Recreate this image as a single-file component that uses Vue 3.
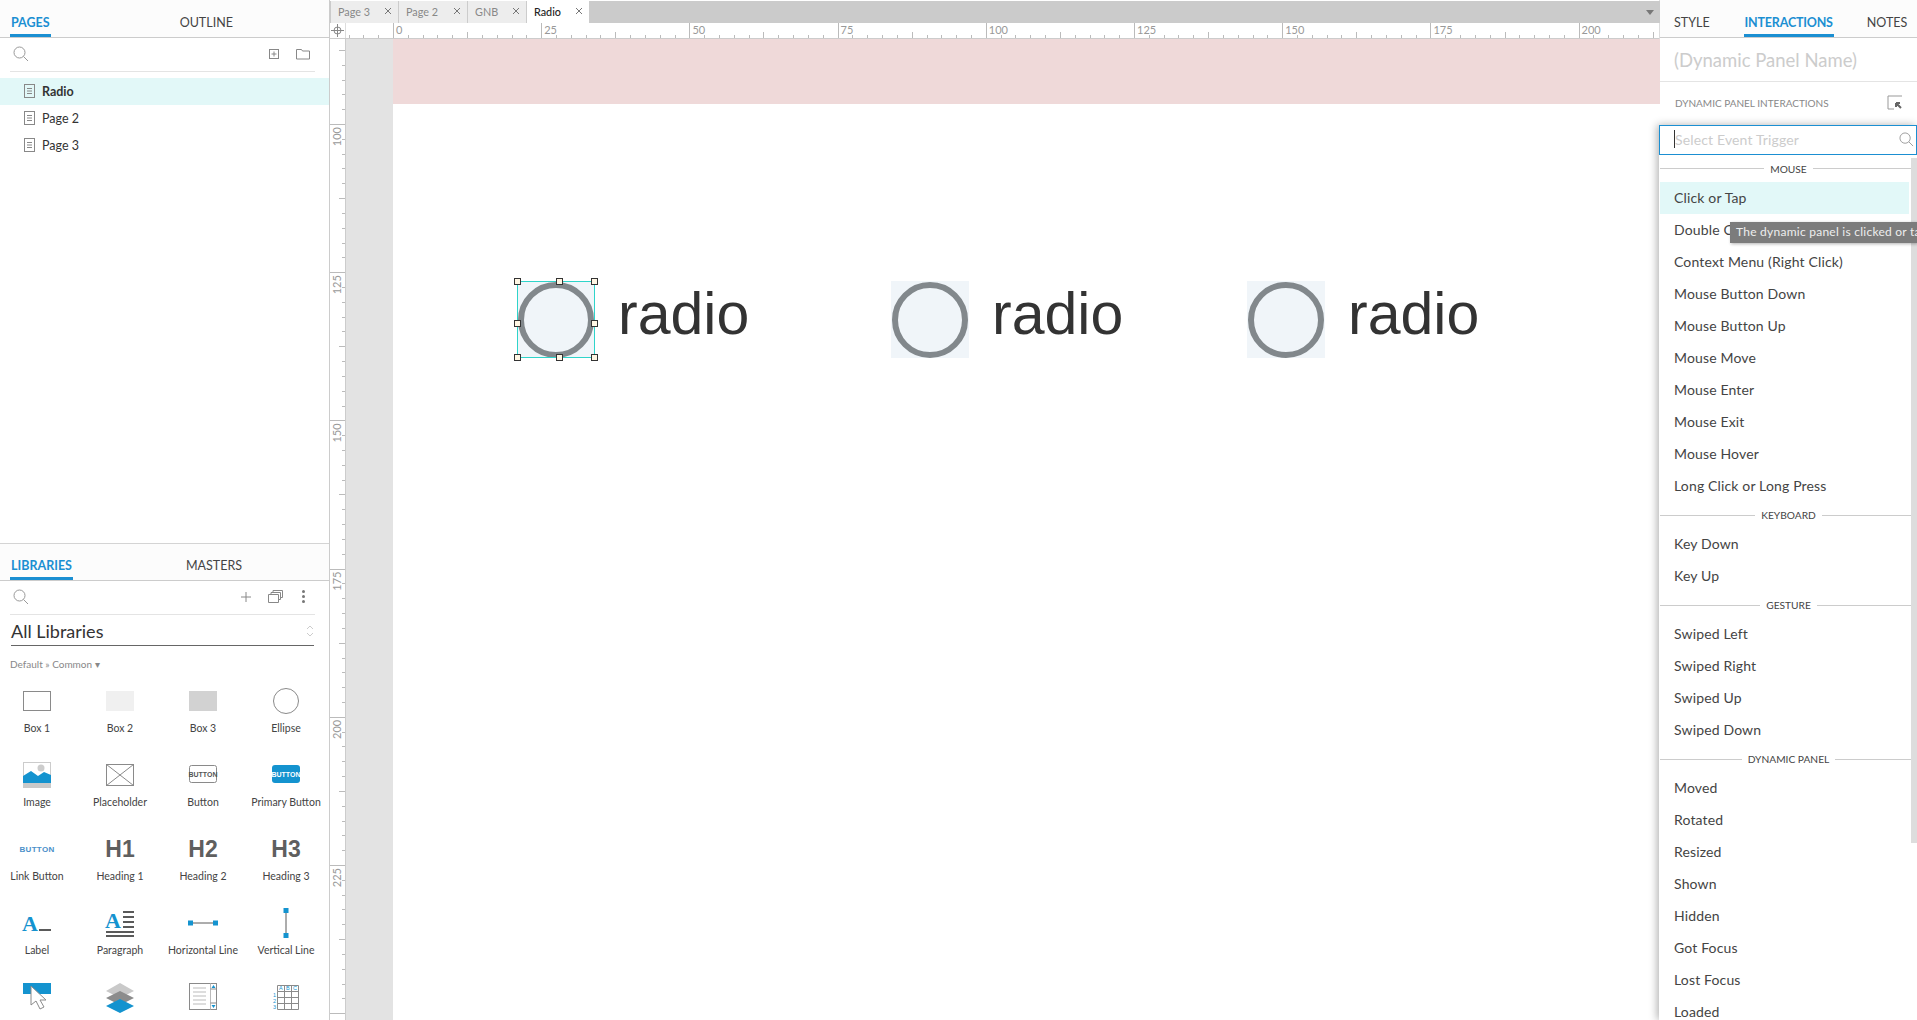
<template>
  <div class="app">
    <aside class="left">
      <section class="pages">
        <div class="tabs">
          <span class="tab active">PAGES</span>
          <span class="tab outline">OUTLINE</span>
        </div>
        <div class="toolbar">
          <svg class="search" width="16" height="16" viewBox="0 0 16 16">
            <circle cx="6.500" cy="6.500" r="5.500" /><path d="M10.500 10.500 15 15" />
          </svg>
          <svg class="tool first" width="12" height="12" viewBox="0 0 12 12">
            <rect x="1.500" y="1.500" width="9" height="9" /><path d="M6 3.500v5M3.500 6h5" />
          </svg>
          <svg class="tool" width="14" height="12" viewBox="0 0 14 12">
            <path d="M.5 1.500h5l1 1.500h7v8H.5z" />
          </svg>
        </div>
        <ul class="page-list">
          <li v-for="p in pages" :key="p" :class="{ current: p === 'Radio' }">
            <svg width="12" height="15" viewBox="0 0 12 15">
              <rect x=".5" y=".5" width="10" height="13" /><path d="M3 4.500h5M3 7h5M3 9.500h5" />
            </svg>
            {{ p }}
          </li>
        </ul>
      </section>

      <section class="libraries">
        <div class="tabs">
          <span class="tab active">LIBRARIES</span>
          <span class="tab masters">MASTERS</span>
        </div>
        <div class="toolbar">
          <svg class="search" width="16" height="16" viewBox="0 0 16 16">
            <circle cx="6.500" cy="6.500" r="5.500" /><path d="M10.500 10.500 15 15" />
          </svg>
          <svg class="tool lib-first" width="12" height="12" viewBox="0 0 12 12">
            <path d="M6 1v10M1 6h10" />
          </svg>
          <svg class="tool lib-copy" width="15" height="13" viewBox="0 0 15 13">
            <path d="M.5 4.500h10v8H.5zM3 4.500V2.500h9.500v7h-2M5 2.500V.5h9.500v7h-2" />
          </svg>
          <span class="dots"><i></i><i></i><i></i></span>
        </div>
        <div class="lib-select">
          <span>All Libraries</span>
          <svg width="8" height="14" viewBox="0 0 8 14"><path d="M1 5l3-3 3 3M1 9l3 3 3-3" /></svg>
        </div>
        <div class="crumb">Default » Common ▾</div>
        <div class="widgets">
          <div v-for="w in widgets" :key="w.id" class="widget">
            <div class="widget-icon">
              <span v-if="w.text" :class="w.cls">{{ w.text }}</span>
              <svg v-else width="40" height="40" viewBox="0 0 40 40" v-html="w.svg"></svg>
            </div>
            <div v-if="w.name" class="widget-name">{{ w.name }}</div>
          </div>
        </div>
      </section>
    </aside>

    <main class="center">
      <div class="doc-tabs">
        <div v-for="t in docTabs" :key="t.name" class="doc-tab" :class="{ open: t.name === 'Radio' }" :style="{ width: t.w + 'px' }">
          <span>{{ t.name }}</span>
          <svg width="8" height="8" viewBox="0 0 8 8"><path d="M1 1l6 6M7 1 1 7" /></svg>
        </div>
        <span class="doc-caret"></span>
      </div>

      <div class="ruler-top">
        <div class="corner">
          <svg width="13" height="13" viewBox="0 0 13 13">
            <circle cx="6.500" cy="6.500" r="3.500" /><path d="M6.500 0v13M0 6.500h13" />
          </svg>
        </div>
        <svg class="hticks" width="1314" height="15">
          <path :d="hPath" />
          <text v-for="l in hLabels" :key="l.v" :x="l.x" y="11">{{ l.v }}</text>
        </svg>
      </div>

      <div class="work">
        <svg class="vticks" width="15" height="982">
          <path :d="vPath" />
          <text v-for="l in vLabels" :key="l.v" :transform="`translate(11 ${l.y}) rotate(-90)`" text-anchor="end">{{ l.v }}</text>
        </svg>
        <div class="pasteboard">
          <div class="page">
            <div class="banner"></div>
            <div v-for="r in radios" :key="r.x" class="radio" :style="{ left: r.x + 'px' }">
              <div class="radio-box"><div class="radio-ring"></div></div>
              <span class="radio-label">radio</span>
            </div>
            <div class="selection">
              <i v-for="h in handles" :key="h" :class="h"></i>
            </div>
          </div>
        </div>
      </div>
    </main>

    <aside class="right">
      <div class="tabs right-tabs">
        <span class="tab">STYLE</span>
        <span class="tab active">INTERACTIONS</span>
        <span class="tab">NOTES</span>
      </div>
      <div class="panel-name">(Dynamic Panel Name)</div>
      <div class="panel-head">
        <span>DYNAMIC PANEL INTERACTIONS</span>
        <svg width="16" height="15" viewBox="0 0 16 15">
          <path class="thin" d="M15 1H1v13h6" />
          <path class="thick" d="M9 8l5 5M9 8v4M9 8h4" />
        </svg>
      </div>
      <div class="dropdown">
        <div class="trigger-input">
          <span class="caret"></span>
          <span class="placeholder">Select Event Trigger</span>
          <svg class="search" width="15" height="15" viewBox="0 0 16 16">
            <circle cx="6.500" cy="6.500" r="5.500" /><path d="M10.500 10.500 15 15" />
          </svg>
        </div>
        <div class="list">
          <template v-for="g in groups" :key="g.title">
            <div class="group-title"><span>{{ g.title }}</span></div>
            <div v-for="e in g.items" :key="e" class="event" :class="{ hover: e === 'Click or Tap' }">{{ e }}</div>
          </template>
        </div>
        <div class="scrollbar"></div>
        <div class="tooltip">The dynamic panel is clicked or tapped</div>
      </div>
    </aside>
  </div>
</template>

<script setup>
const pages = ['Radio', 'Page 2', 'Page 3']

const docTabs = [
  { name: 'Page 3', w: 68 },
  { name: 'Page 2', w: 69 },
  { name: 'GNB', w: 59 },
  { name: 'Radio', w: 63 }
]

const blue = '#1493cf'
const gray = '#8a8a8a'
const dark = '#5a5a5a'

const widgets = [
  { id: 'box1', name: 'Box 1', svg: `<rect x="6.500" y="10.500" width="27" height="19" fill="#fff" stroke="${gray}"/>` },
  { id: 'box2', name: 'Box 2', svg: '<rect x="6" y="10" width="28" height="20" fill="#f0f0f0"/>' },
  { id: 'box3', name: 'Box 3', svg: '<rect x="6" y="10" width="28" height="20" fill="#d2d2d2"/>' },
  { id: 'ellipse', name: 'Ellipse', svg: `<circle cx="20" cy="20" r="12.500" fill="#fff" stroke="${gray}"/>` },
  { id: 'image', name: 'Image', svg: `<rect x="6.500" y="7.500" width="27" height="25" fill="#fff" stroke="#ccc"/><circle cx="24" cy="13" r="3.500" fill="#ccc"/><path d="M6 21l8-5 7 5 6-4 7 3v8H6z" fill="${blue}"/><rect x="6" y="28" width="28" height="5" fill="#c9c9c9"/>` },
  { id: 'placeholder', name: 'Placeholder', svg: `<rect x="6.500" y="9.500" width="27" height="21" fill="#fff" stroke="${gray}"/><path d="M6.500 9.500l27 21M33.500 9.500l-27 21" stroke="${gray}" fill="none"/>` },
  { id: 'button', name: 'Button', svg: `<rect x="6.500" y="10.500" width="27" height="17" rx="2" fill="#fff" stroke="${gray}"/><text x="20" y="22" font-size="7" font-weight="700" text-anchor="middle" fill="#555" font-family="Liberation Sans">BUTTON</text>` },
  { id: 'primary', name: 'Primary Button', svg: `<rect x="6" y="10" width="28" height="18" rx="3" fill="${blue}"/><text x="20" y="22" font-size="7" font-weight="700" text-anchor="middle" fill="#fff" font-family="Liberation Sans">BUTTON</text>` },
  { id: 'link', name: 'Link Button', text: 'BUTTON', cls: 'link-btn' },
  { id: 'h1', name: 'Heading 1', text: 'H1', cls: 'heading' },
  { id: 'h2', name: 'Heading 2', text: 'H2', cls: 'heading' },
  { id: 'h3', name: 'Heading 3', text: 'H3', cls: 'heading' },
  { id: 'label', name: 'Label', svg: `<text x="5" y="28" font-size="22" font-weight="700" fill="${blue}" font-family="Liberation Serif">A</text><rect x="22" y="26" width="12" height="2" fill="${dark}"/>` },
  { id: 'paragraph', name: 'Paragraph', svg: `<text x="5" y="25" font-size="22" font-weight="700" fill="${blue}" font-family="Liberation Serif">A</text><path d="M23 9h11M23 14h11M23 19h11M23 24h11M6 29h28M6 33h28" stroke="${dark}" stroke-width="2"/>` },
  { id: 'hline', name: 'Horizontal Line', svg: `<path d="M8 20h24" stroke="${dark}"/><rect x="5" y="17.500" width="5" height="5" fill="${blue}"/><rect x="30" y="17.500" width="5" height="5" fill="${blue}"/>` },
  { id: 'vline', name: 'Vertical Line', svg: `<path d="M20 8v24" stroke="${dark}"/><rect x="17.500" y="5" width="5" height="5" fill="${blue}"/><rect x="17.500" y="30" width="5" height="5" fill="${blue}"/>` },
  // last row is cut by the window, its captions fall below the edge
  { id: 'hotspot', svg: `<rect x="6" y="6" width="28" height="11" fill="${blue}"/><path d="M14 9v19l5-4 4 8 4-2-4-7h6z" fill="#fff" stroke="${gray}"/>` },
  { id: 'layers', svg: `<path d="M20 6l14 8-14 7-14-7z" fill="#c9c9c9"/><path d="M20 14l14 7-14 7-14-7z" fill="#8c8c8c"/><path d="M20 22l14 7-14 7-14-7z" fill="${blue}"/>` },
  { id: 'repeater', svg: `<rect x="6.500" y="6.500" width="27" height="26" fill="#fff" stroke="${gray}"/><path d="M27.500 6.500v26M10 11h13M10 15h13M10 19h13M10 23h13M10 27h13" stroke="#bbb"/><path d="M27.500 12h6M27.500 26h6" stroke="${gray}"/><path d="M30.500 8l2 3h-4zM30.500 31l2-3h-4z" fill="${blue}"/>` },
  { id: 'table', svg: `<path d="M11.500 14.500h21M11.500 20.500h21M11.500 26.500h21M11.500 32.500h21M11.500 14.500v18M18.500 8.500v24M25.500 8.500v24M32.500 8.500v24M11.500 14.500v-6h21" stroke="${gray}" fill="none"/><g font-size="5.500" font-family="Liberation Sans" fill="${blue}"><text x="13" y="13">A</text><text x="20" y="13">B</text><text x="27" y="13">C</text><text x="7" y="20">1</text><text x="7" y="26">2</text><text x="7" y="32">3</text></g>` }
]

const groups = [
  {
    title: 'MOUSE',
    items: ['Click or Tap', 'Double Click', 'Context Menu (Right Click)', 'Mouse Button Down', 'Mouse Button Up', 'Mouse Move', 'Mouse Enter', 'Mouse Exit', 'Mouse Hover', 'Long Click or Long Press']
  },
  { title: 'KEYBOARD', items: ['Key Down', 'Key Up'] },
  { title: 'GESTURE', items: ['Swiped Left', 'Swiped Right', 'Swiped Up', 'Swiped Down'] },
  { title: 'DYNAMIC PANEL', items: ['Moved', 'Rotated', 'Resized', 'Shown', 'Hidden', 'Got Focus', 'Lost Focus', 'Loaded'] }
]

const radios = [{ x: 124 }, { x: 498 }, { x: 854 }]
const handles = ['tl', 'tm', 'tr', 'ml', 'mr', 'bl', 'bm', 'br']

// rulers: 148.2px per 25 units, ten minor ticks per step
const STEP = 148.2
const ORIGIN_X = 47
const ORIGIN_Y = 85

function ticks (origin, length) {
  const out = []
  for (let i = -10; i * STEP / 10 + origin < length; i++) {
    const pos = i * STEP / 10 + origin
    if (pos < 0) continue
    const kind = i % 10 === 0 ? 15 : i % 5 === 0 ? 6 : 3
    out.push({ pos: Math.round(pos) + 0.5, len: kind })
  }
  return out
}

const hPath = ticks(ORIGIN_X, 1314).map(t => `M${t.pos} 15v-${t.len}`).join('')
const vPath = ticks(ORIGIN_Y, 982).map(t => `M15 ${t.pos}h-${t.len}`).join('')

const hLabels = []
for (let i = 0; i <= 8; i++) hLabels.push({ v: i * 25, x: ORIGIN_X + i * STEP + 3 })

const vLabels = []
for (let i = 0; i <= 5; i++) vLabels.push({ v: 100 + i * 25, y: ORIGIN_Y + i * STEP + 3 })
</script>

<style>
html, body {
  margin: 0;
  overflow: hidden;
  background: #fff;
}
</style>

<style scoped>
.app {
  display: flex;
  width: 1917px;
  height: 1020px;
  overflow: hidden;
  font-family: Lato, "Noto Sans", sans-serif;
  color: #333;
}

svg {
  fill: none;
  stroke: #888;
}

.left {
  width: 329px;
  flex: none;
  display: flex;
  flex-direction: column;
  border-right: 1px solid #ccc;
}

.pages {
  height: 543px;
  flex: none;
}

.libraries {
  flex: 1;
  border-top: 1px solid #d4d4d4;
  overflow: hidden;
}

.tabs {
  display: flex;
  height: 37px;
  align-items: flex-end;
  padding-left: 10px;
  background: #fcfcfc;
  border-bottom: 1px solid #ccc;
  font-size: 12.500px;
}

.libraries .tabs {
  height: 36px;
}

.tab {
  padding: 0 1px 4px;
  border-bottom: 3px solid transparent;
  color: #444;
}

.tab.active {
  color: #1b8fd2;
  font-weight: 700;
  border-bottom-color: #1b8fd2;
}

.outline {
  margin-left: 128px;
}

.masters {
  margin-left: 112px;
}

.toolbar {
  display: flex;
  align-items: center;
  height: 31px;
  margin: 0 14px 0 10px;
  padding: 0 5px 2px 3px;
  border-bottom: 1px solid #e4e4e4;
}

.search {
  stroke: #999;
}

.tool {
  margin-left: 16px;
}

.tool.first {
  margin-left: auto;
}

.lib-first {
  margin-left: auto;
}

.dots {
  display: flex;
  flex-direction: column;
  gap: 2px;
  margin: 0 5px 0 19px;
}

.dots i {
  width: 3px;
  height: 3px;
  border-radius: 50%;
  background: #777;
}

.page-list {
  list-style: none;
  margin: 6px 0 0;
  padding: 0;
  font-size: 12.500px;
}

.page-list li {
  display: flex;
  align-items: center;
  gap: 6px;
  height: 27px;
  padding-left: 24px;
}

.page-list li.current {
  background: #e2f8f8;
  font-weight: 700;
}

.lib-select {
  display: flex;
  justify-content: space-between;
  align-items: center;
  height: 28px;
  padding-top: 2px;
  margin: 0 15px 0 11px;
  border-bottom: 1px solid #666;
  font-size: 18px;
}

.lib-select svg {
  stroke: #ccc;
}

.crumb {
  margin: 12px 0 0 10px;
  font-size: 10px;
  color: #888;
}

.widgets {
  display: grid;
  grid-template-columns: repeat(4, 74px);
  column-gap: 9px;
  grid-auto-rows: 74px;
  margin-top: 11px;
}

.widget {
  text-align: center;
  font-size: 10.500px;
  color: #444;
  white-space: nowrap;
}

.widget-icon {
  display: flex;
  align-items: center;
  justify-content: center;
  height: 40px;
}

.widget-icon svg {
  stroke: none;
  fill: initial;
}

.widget-name {
  line-height: 16px;
  margin-top: -1px;
}

.link-btn {
  font: 700 8px "Liberation Sans", sans-serif;
  color: #4a8fc9;
  letter-spacing: .3px;
}

.heading {
  font: 700 23px "Liberation Sans", sans-serif;
  color: #5f5f5f;
}

.center {
  flex: 1;
  min-width: 0;
  display: flex;
  flex-direction: column;
}

.doc-tabs {
  display: flex;
  align-items: stretch;
  position: relative;
  height: 22px;
  margin-top: 1px;
  padding-left: 1px;
  background: #cbcbcb;
}

.doc-tab {
  display: flex;
  align-items: center;
  justify-content: space-between;
  box-sizing: border-box;
  padding: 0 6px 2px 7px;
  background: #ededed;
  border-right: 1px solid #ccc;
  font-size: 10.800px;
  color: #888;
}

.doc-tab.open {
  background: #fff;
  color: #222;
  font-weight: 500;
}

.doc-tab svg {
  stroke: #777;
}

.doc-caret {
  position: absolute;
  right: 6px;
  top: 9px;
  border: 4px solid transparent;
  border-top: 5px solid #777;
  border-bottom: 0;
}

.ruler-top {
  display: flex;
  height: 15px;
  background: #fff;
  border-bottom: 1px solid #ccc;
}

.corner {
  display: flex;
  align-items: center;
  justify-content: center;
  width: 15px;
  flex: none;
  border-right: 1px solid #ddd;
}

.hticks {
  stroke: #bbb;
}

.hticks text,
.vticks text {
  fill: #999;
  stroke: none;
  font-size: 11px;
}

.work {
  flex: 1;
  display: flex;
  min-height: 0;
}

.vticks {
  flex: none;
  stroke: #bbb;
  border-right: 1px solid #ccc;
}

.pasteboard {
  flex: 1;
  padding-left: 47px;
  background: #e3e3e3;
  min-width: 0;
}

.page {
  position: relative;
  height: 100%;
  background: #fff;
  overflow: hidden;
}

.banner {
  height: 65px;
  background: #efd9d9;
}

/* free canvas: items sit where the designer dropped them */
.radio {
  position: absolute;
  top: 242px;
  display: flex;
  align-items: flex-start;
}

.radio-box {
  width: 78px;
  height: 77px;
  background: #f0f5f9;
  display: flex;
  align-items: center;
  justify-content: center;
}

.radio-ring {
  box-sizing: border-box;
  width: 76px;
  height: 76px;
  border: 6px solid #82888c;
  border-radius: 50%;
}

.radio-label {
  margin-left: 23px;
  font: 59px/66px "Liberation Sans", sans-serif;
  color: #333;
}

.selection {
  position: absolute;
  left: 124px;
  top: 242px;
  width: 78px;
  height: 77px;
  box-sizing: border-box;
  border: 1px solid #2fd4ca;
}

.selection i {
  position: absolute;
  width: 7px;
  height: 7px;
  box-sizing: border-box;
  background: #fff6e4;
  border: 1px solid #333;
}

.tl { left: -4px; top: -4px; }
.tm { left: 38px; top: -4px; }
.tr { right: -4px; top: -4px; }
.ml { left: -4px; top: 38px; }
.mr { right: -4px; top: 38px; }
.bl { left: -4px; bottom: -4px; }
.bm { left: 38px; bottom: -4px; }
.br { right: -4px; bottom: -4px; }

.right {
  width: 257px;
  flex: none;
  display: flex;
  flex-direction: column;
  border-left: 1px solid #ddd;
  margin-left: -1px;
}

.right-tabs {
  padding-left: 13px;
  gap: 33px;
}

.right-tabs .active {
  letter-spacing: -.2px;
  margin-right: -1px;
}

.panel-name {
  height: 44px;
  line-height: 44px;
  box-sizing: border-box;
  padding-left: 14px;
  border-bottom: 1px solid #e4e4e4;
  font-size: 18.500px;
  color: #ccc;
}

.panel-head {
  display: flex;
  align-items: center;
  justify-content: space-between;
  box-sizing: border-box;
  height: 43px;
  padding: 0 14px 2px 15px;
  font-size: 10px;
  color: #888;
}

.panel-head .thin {
  stroke: #999;
}

.panel-head .thick {
  stroke: #666;
  stroke-width: 2;
}

.dropdown {
  position: relative;
  z-index: 2;
  flex: 1;
  min-height: 0;
  margin-left: -1px;
  background: #fff;
  box-shadow: -2px 0 8px rgba(0, 0, 0, .3);
}

.trigger-input {
  display: flex;
  align-items: center;
  height: 30px;
  box-sizing: border-box;
  padding: 0 0 2px 14px;
  border: 1px solid #1b8fd2;
  font-size: 14px;
  letter-spacing: .15px;
  color: #ccc;
}

.caret {
  width: 1px;
  height: 18px;
  background: #333;
}

.trigger-input .search {
  margin-left: auto;
  margin-right: 2px;
}

.list {
  margin-left: 1px;
  overflow: hidden;
}

.group-title {
  display: flex;
  align-items: center;
  height: 26px;
  gap: 6px;
  font-size: 10.200px;
  color: #444;
}

.group-title:first-child {
  height: 27px;
}

.group-title::before,
.group-title::after {
  content: "";
  flex: 1;
  height: 1px;
  background: #ccc;
}

.event {
  height: 32px;
  line-height: 32px;
  margin-right: 8px;
  padding-left: 14px;
  font-size: 14px;
  letter-spacing: .15px;
  color: #444;
}

.event.hover {
  background: #e2f8f8;
}

.scrollbar {
  position: absolute;
  right: 0;
  top: 33px;
  width: 6px;
  height: 685px;
  background: #ddd;
}

.tooltip {
  position: absolute;
  left: 71px;
  top: 97px;
  right: 0;
  height: 21px;
  line-height: 20px;
  padding-left: 6px;
  background: #7c7c7c;
  color: #eee;
  font-size: 12px;
  letter-spacing: .25px;
  white-space: nowrap;
  overflow: hidden;
  box-shadow: 1px 1px 3px rgba(0, 0, 0, .3);
}
</style>
